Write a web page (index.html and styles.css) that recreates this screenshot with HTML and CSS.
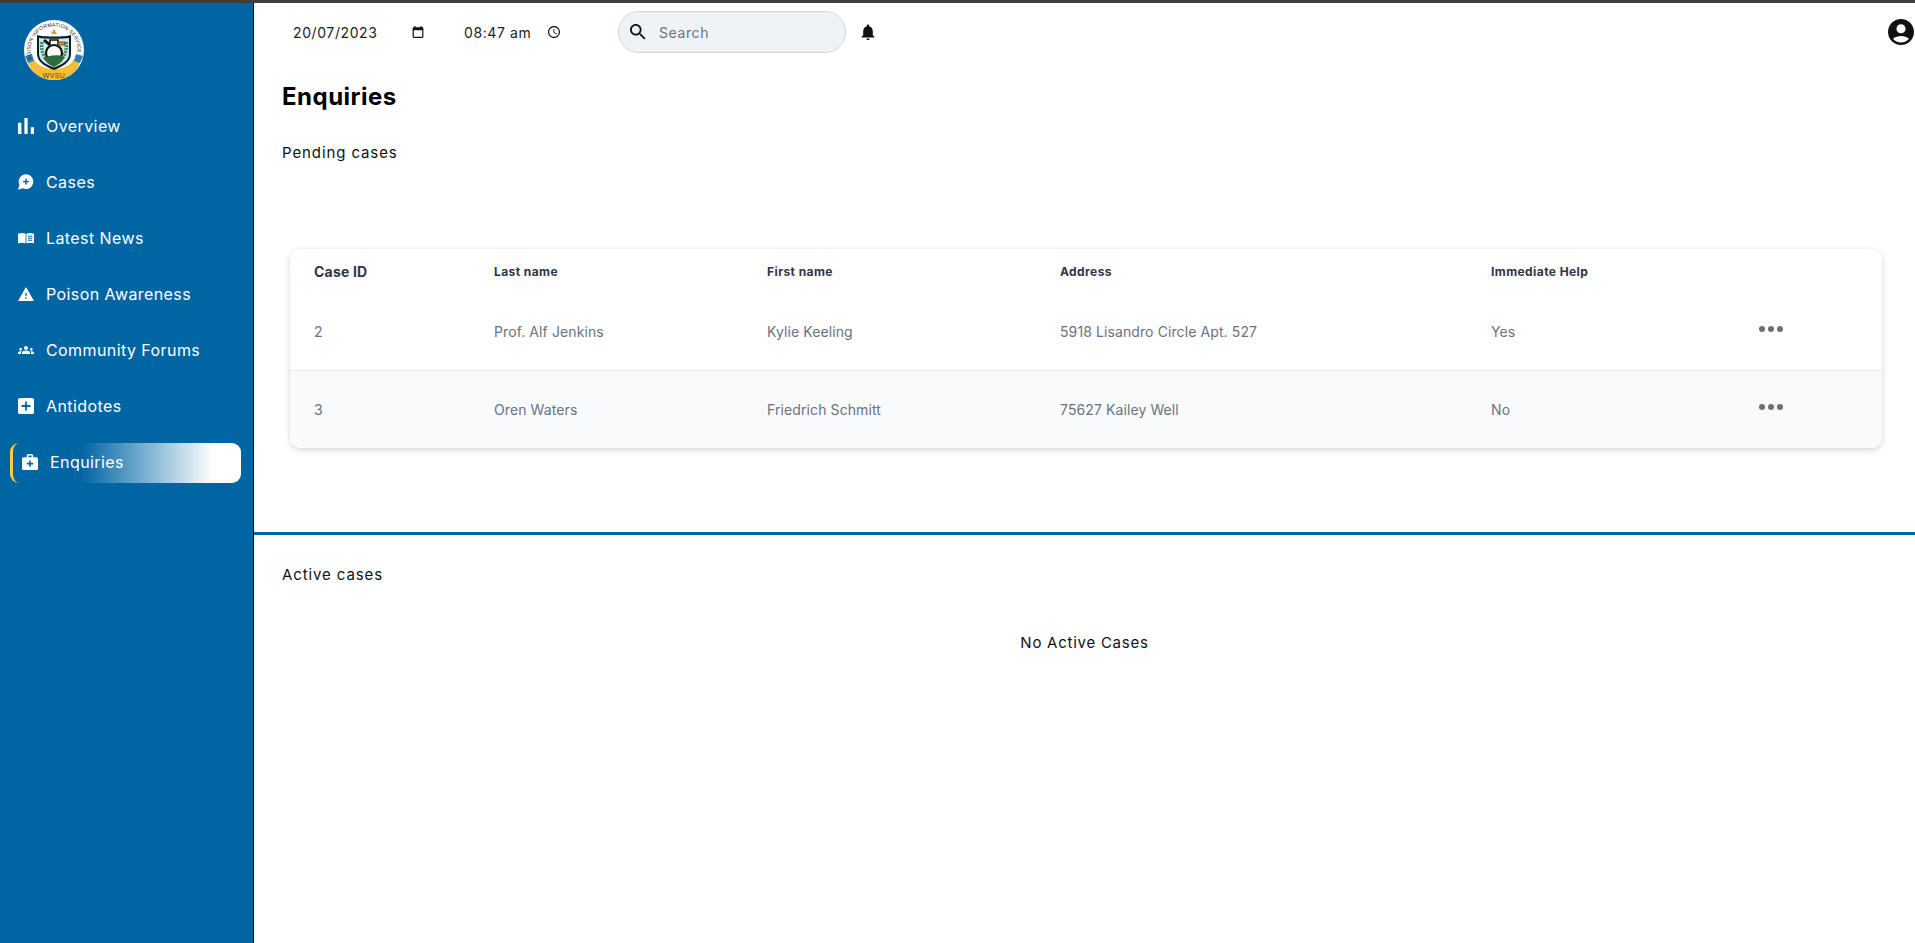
FILE: index.html
```html
<!DOCTYPE html>
<html lang="en">

<head>
    <meta charset="UTF-8">
    <meta name="viewport" content="width=device-width, initial-scale=1.0">
    <title>Enquiries</title>
    <link rel="stylesheet" href="styles.css">
</head>

<body>
    <div class="topline"></div>
    <div class="app">
        <aside class="sidebar">
            <div class="logo">
                <svg width="62" height="62" viewBox="0 0 62 62">
                    <defs>
                        <path id="ringtext" d="M9.3 39 A23.5 23.5 0 1 1 52.7 39"></path>
                    </defs>
                    <circle cx="31" cy="30" r="30" fill="#fff"></circle>
                    <path d="M5 42 C12 66 50 66 57 42 L51 39 C46 52 16 52 11 39 Z" fill="#f7bd35"></path>
                    <path d="M2 36l7-2 2 7-6 2zM60 36l-7-2-2 7 6 2z" fill="#2f7fb5"></path>
                    <text class="logo-ring"><textPath href="#ringtext">POISON INFORMATION SERVICE</textPath></text>
                    <path d="M31 9l3 5h-6z" fill="#d9a02c"></path>
                    <path d="M14 15 C20 17 42 17 48 15 V34 C48 42 39 47 31 50 C23 47 14 42 14 34 Z" fill="#0a1f22"></path>
                    <path d="M16 18 C22 19 40 19 46 18 V34 C46 41 38 45 31 47.5 C24 45 16 41 16 34 Z" fill="#cfe6ef"></path>
                    <path d="M19 22c-1 6 0 11 3 15M43 22c1 6 0 11-3 15" stroke="#3b8f55" stroke-width="3.5" fill="none" stroke-dasharray="2 1"></path>
                    <path d="M22 19l6 5-2 2-6-5z" fill="#111"></path>
                    <rect x="27" y="20" width="8" height="6" fill="#fff" stroke="#111" stroke-width="1.5"></rect>
                    <path d="M35 22h7v3h-7z" fill="#d89a25" stroke="#111" stroke-width=".6"></path>
                    <circle cx="31" cy="33" r="8" fill="#fff" stroke="#111" stroke-width="2.2"></circle>
                    <path d="M20 38c6-3 16-4 22-1-3 5-7 8-11 10-5-2-8-5-11-9z" fill="#2d6b3a"></path>
                    <text class="logo-wvsu" x="31" y="58" text-anchor="middle">WVSU</text>
                </svg>
            </div>
            <nav class="menu">
                <a class="menu-item">
                    <svg class="menu-icon" viewBox="5 5 14 14"><path d="M5 9.2h3V19H5zM10.6 5h2.8v14h-2.8zm5.6 8H19v6h-2.8z"></path></svg>
                    Overview
                </a>
                <a class="menu-item">
                    <svg class="menu-icon" viewBox="1 2 22 21"><path d="M12 2C6.48 2 2 6.48 2 12c0 1.54.36 2.98.97 4.29L1 23l6.71-1.97C9.02 21.64 10.46 22 12 22c5.52 0 10-4.48 10-10S17.52 2 12 2zm4 11h-3v3h-2v-3H8v-2h3V8h2v3h3v2z"></path></svg>
                    Cases
                </a>
                <a class="menu-item">
                    <svg class="menu-icon" viewBox="0 0 24 24"><path fill-rule="evenodd" d="M11.4 5.5C8 4.4 4 4.4 0 5.5V20C4 19 8 19 11.4 20ZM12.6 5.5V20C16 19 20 19 24 20V5.5C20 4.4 16 4.4 12.6 5.5ZM15 8.5h6.5V10H15ZM15 11.5h6.5V13H15ZM15 14.5h6.5V16H15Z"></path></svg>
                    Latest News
                </a>
                <a class="menu-item">
                    <svg class="menu-icon" viewBox="1 2 22 19"><path d="M1 21h22L12 2 1 21zm12-3h-2v-2h2v2zm0-4h-2v-4h2v4z"></path></svg>
                    Poison Awareness
                </a>
                <a class="menu-item">
                    <svg class="menu-icon" viewBox="0 0 24 24"><path d="M12 12.75c1.63 0 3.07.39 4.24.9 1.08.48 1.76 1.56 1.76 2.73V18H6v-1.61c0-1.18.68-2.26 1.76-2.73 1.17-.52 2.61-.91 4.24-.91zM4 13c1.1 0 2-.9 2-2s-.9-2-2-2-2 .9-2 2 .9 2 2 2zm1.13 1.1c-.37-.06-.74-.1-1.13-.1-.99 0-1.93.21-2.78.58C.48 14.9 0 15.62 0 16.43V18h4.5v-1.61c0-.83.23-1.61.63-2.29zM20 13c1.1 0 2-.9 2-2s-.9-2-2-2-2 .9-2 2 .9 2 2 2zm4 3.43c0-.81-.48-1.53-1.22-1.85-.85-.37-1.79-.58-2.78-.58-.39 0-.76.04-1.13.1.4.68.63 1.46.63 2.29V18H24v-1.57zM12 6c1.66 0 3 1.34 3 3s-1.34 3-3 3-3-1.34-3-3 1.34-3 3-3z"></path></svg>
                    Community Forums
                </a>
                <a class="menu-item">
                    <svg class="menu-icon" viewBox="3 3 18 18"><path d="M19 3H5c-1.11 0-2 .9-2 2v14c0 1.1.89 2 2 2h14c1.1 0 2-.9 2-2V5c0-1.1-.9-2-2-2zm-2 10h-4v4h-2v-4H7v-2h4V7h2v4h4v2z"></path></svg>
                    Antidotes
                </a>
                <a class="menu-item active">
                    <svg class="menu-icon" viewBox="2 2 20 20"><path d="M20 6h-4V4c0-1.1-.9-2-2-2h-4c-1.1 0-2 .9-2 2v2H4c-1.1 0-2 .9-2 2v12c0 1.1.9 2 2 2h16c1.1 0 2-.9 2-2V8c0-1.1-.9-2-2-2zM10 4h4v2h-4V4zm6 11h-3v3h-2v-3H8v-2h3v-3h2v3h3v2z"></path></svg>
                    Enquiries
                </a>
            </nav>
        </aside>

        <main class="content">
            <header class="topbar">
                <div class="date-field">
                    <span>20/07/2023</span>
                    <svg class="small-icon" viewBox="3 2 18 20"><path d="M19 4h-1V2h-2v2H8V2H6v2H5c-1.1 0-2 .9-2 2v14c0 1.1.9 2 2 2h14c1.1 0 2-.9 2-2V6c0-1.1-.9-2-2-2zm0 16H5V9h14v11z"></path></svg>
                </div>
                <div class="time-field">
                    <span>08:47 am</span>
                    <svg class="small-icon" viewBox="2 2 20 20"><path d="M11.99 2C6.47 2 2 6.48 2 12s4.47 10 9.99 10C17.52 22 22 17.52 22 12S17.52 2 11.99 2zM12 20c-4.42 0-8-3.58-8-8s3.58-8 8-8 8 3.58 8 8-3.58 8-8 8zm.5-13H11v6l5.25 3.15.75-1.23-4.5-2.67z"></path></svg>
                </div>
                <div class="search">
                    <svg class="search-icon" viewBox="3 3 18 18"><path d="M15.5 14h-.79l-.28-.27C15.41 12.59 16 11.11 16 9.5 16 5.91 13.09 3 9.5 3S3 5.91 3 9.5 5.91 16 9.5 16c1.61 0 3.09-.59 4.23-1.57l.27.28v.79l5 4.99L20.49 19l-4.99-5zm-6 0C7.01 14 5 11.99 5 9.5S7.01 5 9.5 5 14 7.01 14 9.5 11.99 14 9.5 14z"></path></svg>
                    <span>Search</span>
                </div>
                <svg class="bell" viewBox="4 2 16 20"><path d="M12 22c1.1 0 2-.9 2-2h-4c0 1.1.89 2 2 2zm6-6v-5c0-3.07-1.64-5.64-4.5-6.32V4c0-.83-.67-1.5-1.5-1.5s-1.5.67-1.5 1.5v.68C7.63 5.36 6 7.92 6 11v5l-2 2v1h16v-1l-2-2z"></path></svg>
                <svg class="account" viewBox="2 2 20 20"><path d="M12 2C6.48 2 2 6.48 2 12s4.48 10 10 10 10-4.48 10-10S17.52 2 12 2zm0 4c1.93 0 3.5 1.57 3.5 3.5S13.93 13 12 13s-3.5-1.57-3.5-3.5S10.07 6 12 6zm0 14c-2.03 0-4.43-.82-6.14-2.88C7.55 15.8 9.68 15 12 15s4.45.8 6.14 2.12C16.43 19.18 14.03 20 12 20z"></path></svg>
            </header>

            <section class="pending">
                <h1>Enquiries</h1>
                <p class="section-label pending-label">Pending cases</p>
                <div class="table-card">
                    <table>
                        <colgroup>
                            <col class="col-id">
                            <col class="col-last">
                            <col class="col-first">
                            <col class="col-address">
                            <col class="col-help">
                            <col>
                        </colgroup>
                        <thead>
                            <tr>
                                <th class="th-id">Case ID</th>
                                <th>Last name</th>
                                <th>First name</th>
                                <th>Address</th>
                                <th>Immediate Help</th>
                                <th></th>
                            </tr>
                        </thead>
                        <tbody>
                            <tr>
                                <td>2</td>
                                <td>Prof. Alf Jenkins</td>
                                <td>Kylie Keeling</td>
                                <td>5918 Lisandro Circle Apt. 527</td>
                                <td>Yes</td>
                                <td><div class="dots"><i></i><i></i><i></i></div></td>
                            </tr>
                            <tr class="alt">
                                <td>3</td>
                                <td>Oren Waters</td>
                                <td>Friedrich Schmitt</td>
                                <td>75627 Kailey Well</td>
                                <td>No</td>
                                <td><div class="dots"><i></i><i></i><i></i></div></td>
                            </tr>
                        </tbody>
                    </table>
                </div>
            </section>

            <section class="active-cases">
                <p class="section-label">Active cases</p>
                <p class="no-cases">No Active Cases</p>
            </section>
        </main>
    </div>
</body>

</html>
```

FILE: styles.css
```css
* {
    margin: 0;
    padding: 0;
    box-sizing: border-box;
}

body {
    height: 943px;
    overflow: hidden;
    background-color: #fff;
    color: #111;
    font-family: Inter, "Noto Sans", sans-serif;
}

.topline {
    height: 3px;
    background: #3e3e3e;
}

.app {
    display: flex;
    height: 940px;
}

/* sidebar */
.sidebar {
    flex: 0 0 254px;
    background: #0065a3;
    border-right: 1px solid #000;
}

.logo {
    height: 103px;
    padding: 17px 0 0 23px;
}

.logo-ring {
    font-family: "Liberation Sans", sans-serif;
    font-size: 5.2px;
    letter-spacing: 0.15px;
    fill: #222;
}

.logo-wvsu {
    font-family: "Liberation Sans", sans-serif;
    font-size: 7px;
    letter-spacing: 0.4px;
    fill: #5b4a10;
}

.menu {
    display: flex;
    flex-direction: column;
    gap: 16px;
    padding-left: 18px;
}

.menu-item {
    display: flex;
    align-items: center;
    gap: 12px;
    height: 40px;
    color: #fff;
    font-size: 16px;
    letter-spacing: 0.42px;
}

.menu-icon {
    flex: 0 0 16px;
    width: 16px;
    height: 16px;
    fill: #fff;
}

.menu-item.active {
    width: 231px;
    margin: 1px 0 0 -8px;
    padding: 0 0 2px 9px;
    border-left: 3px solid #ffcb3d;
    border-radius: 9px;
    background: linear-gradient(90deg, #0065a3 30%, #fff 88%);
}

/* main */
.content {
    flex: 1;
    min-width: 0;
}

.topbar {
    display: flex;
    align-items: center;
    height: 58px;
    padding-left: 39px;
    font-size: 14px;
    letter-spacing: 0.6px;
    color: #222;
}

.small-icon {
    width: 12px;
    height: 12px;
    fill: #111;
}

.date-field {
    display: flex;
    align-items: center;
    width: 171px;
    gap: 34px;
}

.time-field {
    display: flex;
    align-items: center;
    width: 154px;
    gap: 17px;
}

.search {
    display: flex;
    align-items: center;
    gap: 13px;
    width: 228px;
    height: 42px;
    padding-left: 11px;
    border: 1px solid #cfd6de;
    border-radius: 21px;
    background: #eff3f8;
    color: #6b7280;
}

.search-icon {
    width: 16px;
    height: 16px;
    fill: #111;
}

.bell {
    width: 14px;
    height: 16px;
    margin-left: 15px;
    fill: #111;
}

.account {
    width: 26px;
    height: 26px;
    margin-left: auto;
    margin-right: 1px;
    fill: #111;
}

.pending {
    height: 474px;
    padding-left: 28px;
    border-bottom: 3px solid #0065a3;
}

h1 {
    padding-top: 18px;
    font-size: 24px;
    line-height: 36px;
    font-weight: 700;
    letter-spacing: 0.5px;
    color: #000;
}

.section-label {
    font-size: 15px;
    line-height: 24px;
    letter-spacing: 0.9px;
    color: #111;
}

.pending-label {
    margin-top: 26px;
}

.table-card {
    width: 1592px;
    margin: 84px 0 0 8px;
    overflow: hidden;
    border-radius: 10px;
    box-shadow: 0 2px 6px rgba(0, 0, 0, 0.16), 0 0 3px rgba(0, 0, 0, 0.03);
}

table {
    width: 100%;
    table-layout: fixed;
    border-collapse: collapse;
}

.col-id { width: 180px; }
.col-last { width: 273px; }
.col-first { width: 293px; }
.col-address { width: 431px; }
.col-help { width: 268px; }

th {
    height: 45px;
    padding: 0 0 0 24px;
    text-align: left;
    font-size: 12px;
    font-weight: 700;
    letter-spacing: 0.42px;
    color: #2f3447;
}

.th-id {
    font-size: 14px;
    letter-spacing: 0.2px;
}

td {
    height: 78px;
    padding: 0 0 0 24px;
    font-size: 14px;
    letter-spacing: 0.1px;
    color: #6b7280;
}

tbody tr:first-child td {
    height: 76px;
    border-bottom: 1px solid #e5e7eb;
}

.alt td {
    background: #f9fafb;
}

.dots {
    display: flex;
    gap: 3px;
    margin-top: -6px;
}

.alt .dots {
    margin-top: -4px;
}

.dots i {
    width: 6px;
    height: 6px;
    border-radius: 50%;
    background: #6f6f6f;
}

.active-cases {
    padding: 28px 0 0 28px;
}

.no-cases {
    margin: 44px 0 0 -28px;
    text-align: center;
    font-size: 15px;
    line-height: 24px;
    letter-spacing: 0.75px;
}
```
